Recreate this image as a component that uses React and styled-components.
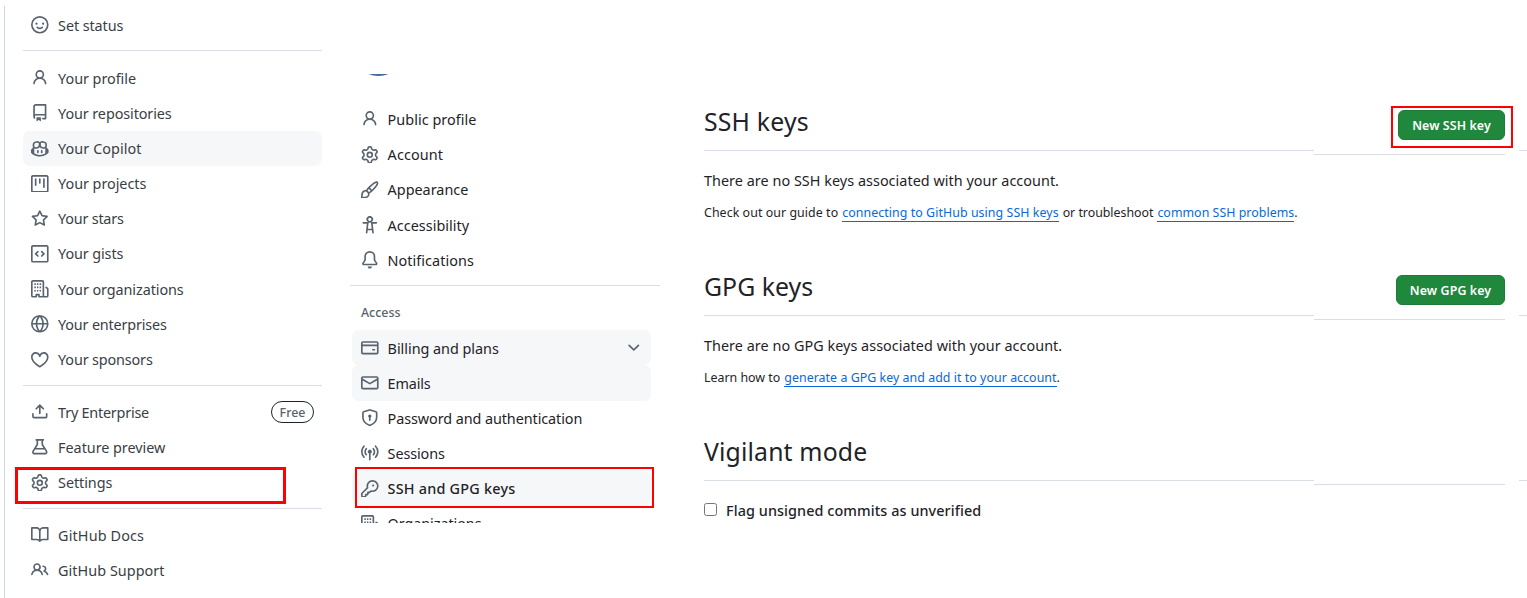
import React from "react";
import styled, { createGlobalStyle, css } from "styled-components";

const GlobalStyle = createGlobalStyle`
  *, *::before, *::after { box-sizing: border-box; }
  body {
    margin: 0;
    background: #ffffff;
    color: #1f2328;
    font-family: "Noto Sans", "Open Sans", sans-serif;
    font-size: 14.4px;
    overflow: hidden;
  }
`;

const paths = {
  smiley: "M8 0a8 8 0 1 1 0 16A8 8 0 0 1 8 0ZM1.5 8a6.5 6.5 0 1 0 13 0 6.5 6.5 0 0 0-13 0Zm3.82 1.636a.75.75 0 0 1 1.038.175l.007.009c.103.118.22.222.35.31.264.178.683.37 1.285.37.602 0 1.02-.192 1.285-.371.13-.088.247-.192.35-.31l.007-.008a.75.75 0 0 1 1.222.87c-.05.08-.12.17-.21.26-.16.166-.338.316-.53.445-.63.418-1.37.638-2.127.629-.946 0-1.652-.308-2.126-.63a3.331 3.331 0 0 1-.715-.657.75.75 0 0 1 .169-1.092ZM12 7a1 1 0 1 1-2 0 1 1 0 0 1 2 0ZM5 8a1 1 0 1 1 0-2 1 1 0 0 1 0 2Z",
  person: "M10.561 8.073a6.005 6.005 0 0 1 3.432 5.142.75.75 0 1 1-1.498.07 4.5 4.5 0 0 0-8.99 0 .75.75 0 0 1-1.498-.07 6.004 6.004 0 0 1 3.431-5.142 3.999 3.999 0 1 1 5.123 0ZM10.5 5a2.5 2.5 0 1 0-5 0 2.5 2.5 0 0 0 5 0Z",
  repo: "M2 2.5A2.5 2.5 0 0 1 4.5 0h8.75a.75.75 0 0 1 .75.75v12.5a.75.75 0 0 1-.75.75h-2.5a.75.75 0 0 1 0-1.5h1.75v-2h-8a1 1 0 0 0-.714 1.7.75.75 0 1 1-1.072 1.05A2.495 2.495 0 0 1 2 11.5Zm10.5-1h-8a1 1 0 0 0-1 1v6.708A2.486 2.486 0 0 1 4.5 9h8ZM5 12.25a.25.25 0 0 1 .25-.25h3.5a.25.25 0 0 1 .25.25v3.25a.25.25 0 0 1-.4.2l-1.45-1.087a.249.249 0 0 0-.3 0L5.4 15.7a.25.25 0 0 1-.4-.2Z",
  copilot: "M7.998 15.035c-4.562 0-7.873-2.914-7.998-3.749V9.338c.085-.628.677-1.686 1.588-2.065.013-.07.024-.143.036-.218.029-.183.06-.384.126-.612-.201-.508-.254-1.084-.254-1.656 0-.87.128-1.769.693-2.484.579-.733 1.494-1.124 2.724-1.261 1.206-.134 2.262.034 2.944.765.05.053.096.108.139.165.044-.057.094-.112.143-.165.682-.731 1.738-.899 2.944-.765 1.23.137 2.145.528 2.724 1.261.566.715.693 1.614.693 2.484 0 .572-.053 1.148-.254 1.656.066.228.098.429.126.612.012.076.024.148.037.218.924.385 1.522 1.471 1.591 2.095v1.872c0 .766-3.351 3.795-8.002 3.795Zm0-1.485c2.28 0 4.584-1.11 5.002-1.433V7.862l-.023-.116c-.49.21-1.075.291-1.727.291-1.146 0-2.059-.327-2.71-.991A3.222 3.222 0 0 1 8 6.303a3.24 3.24 0 0 1-.544.743c-.65.664-1.563.991-2.71.991-.652 0-1.236-.081-1.727-.291l-.023.116v4.255c.419.323 2.722 1.433 5.002 1.433ZM6.762 2.83c-.193-.206-.637-.413-1.682-.297-1.019.113-1.479.404-1.713.7-.247.312-.369.789-.369 1.554 0 .793.129 1.171.308 1.371.162.181.519.379 1.442.379.853 0 1.339-.235 1.638-.54.315-.322.527-.827.617-1.553.117-.935-.037-1.395-.241-1.614Zm4.155-.297c-1.044-.116-1.488.091-1.681.297-.204.219-.359.679-.242 1.614.091.726.303 1.231.618 1.553.299.305.784.54 1.638.54.922 0 1.28-.198 1.442-.379.179-.2.308-.578.308-1.371 0-.765-.123-1.242-.37-1.554-.233-.296-.693-.587-1.713-.7ZM6.25 9.037a.75.75 0 0 1 .75.75v1.501a.75.75 0 0 1-1.5 0V9.787a.75.75 0 0 1 .75-.75Zm4.25.75v1.501a.75.75 0 0 1-1.5 0V9.787a.75.75 0 0 1 1.5 0Z",
  project: "M1.75 0h12.5C15.216 0 16 .784 16 1.75v12.5A1.75 1.75 0 0 1 14.25 16H1.75A1.75 1.75 0 0 1 0 14.25V1.75C0 .784.784 0 1.75 0ZM1.5 1.75v12.5c0 .138.112.25.25.25h12.5a.25.25 0 0 0 .25-.25V1.75a.25.25 0 0 0-.25-.25H1.75a.25.25 0 0 0-.25.25ZM11.75 3a.75.75 0 0 1 .75.75v7.5a.75.75 0 0 1-1.5 0v-7.5a.75.75 0 0 1 .75-.75Zm-8.25.75a.75.75 0 0 1 1.5 0v5.5a.75.75 0 0 1-1.5 0ZM8 3a.75.75 0 0 1 .75.75v3.5a.75.75 0 0 1-1.5 0v-3.5A.75.75 0 0 1 8 3Z",
  star: "M8 .25a.75.75 0 0 1 .673.418l1.882 3.815 4.21.612a.75.75 0 0 1 .416 1.279l-3.046 2.97.719 4.192a.751.751 0 0 1-1.088.791L8 12.347l-3.766 1.98a.75.75 0 0 1-1.088-.79l.72-4.194L.818 6.374a.75.75 0 0 1 .416-1.28l4.21-.611L7.327.668A.75.75 0 0 1 8 .25Zm0 2.445L6.615 5.5a.75.75 0 0 1-.564.41l-3.097.45 2.24 2.184a.75.75 0 0 1 .216.664l-.528 3.084 2.769-1.456a.75.75 0 0 1 .698 0l2.77 1.456-.53-3.084a.75.75 0 0 1 .216-.664l2.24-2.183-3.096-.45a.75.75 0 0 1-.564-.41L8 2.694Z",
  gist: "M0 1.75C0 .784.784 0 1.75 0h12.5C15.216 0 16 .784 16 1.75v12.5A1.75 1.75 0 0 1 14.25 16H1.75A1.75 1.75 0 0 1 0 14.25Zm1.75-.25a.25.25 0 0 0-.25.25v12.5c0 .138.112.25.25.25h12.5a.25.25 0 0 0 .25-.25V1.75a.25.25 0 0 0-.25-.25Zm7.47 3.97a.75.75 0 0 1 1.06 0l2 2a.75.75 0 0 1 0 1.06l-2 2a.749.749 0 0 1-1.275-.326.749.749 0 0 1 .215-.734L10.69 8 9.22 6.53a.75.75 0 0 1 0-1.06ZM6.78 6.53 5.31 8l1.47 1.47a.749.749 0 0 1-.326 1.275.749.749 0 0 1-.734-.215l-2-2a.75.75 0 0 1 0-1.06l2-2a.751.751 0 0 1 1.042.018.751.751 0 0 1 .018 1.042Z",
  organization: "M1.75 16A1.75 1.75 0 0 1 0 14.25V1.75C0 .784.784 0 1.75 0h8.5C11.216 0 12 .784 12 1.75v12.5c0 .085-.006.168-.018.25h2.268a.25.25 0 0 0 .25-.25V8.285a.25.25 0 0 0-.111-.208l-1.055-.703a.749.749 0 1 1 .832-1.248l1.055.703c.487.325.779.871.779 1.456v5.965A1.75 1.75 0 0 1 14.25 16h-3.5a.766.766 0 0 1-.197-.026c-.099.017-.2.026-.303.026h-3a.75.75 0 0 1-.75-.75V14h-1v1.25a.75.75 0 0 1-.75.75Zm-.25-1.75c0 .138.112.25.25.25H4v-1.25a.75.75 0 0 1 .75-.75h2.5a.75.75 0 0 1 .75.75v1.25h2.25a.25.25 0 0 0 .25-.25V1.75a.25.25 0 0 0-.25-.25h-8.5a.25.25 0 0 0-.25.25ZM3 3h1.4v1.5H3ZM5.4 3h1.3v1.5H5.4ZM7.8 3h1.4v1.5H7.8ZM3 6h1.4v1.5H3ZM5.4 6h1.3v1.5H5.4ZM7.8 6h1.4v1.5H7.8ZM3 9h1.4v1.5H3ZM5.4 9h1.3v1.5H5.4ZM7.8 9h1.4v1.5H7.8Z",
  globe: "M8 0a8 8 0 1 1 0 16A8 8 0 0 1 8 0ZM5.78 8.75a9.64 9.64 0 0 0 1.363 4.177c.255.426.542.832.857 1.215.245-.296.551-.705.857-1.215A9.64 9.64 0 0 0 10.22 8.75Zm4.44-1.5a9.64 9.64 0 0 0-1.363-4.177c-.307-.51-.612-.919-.857-1.215a9.927 9.927 0 0 0-.857 1.215A9.64 9.64 0 0 0 5.78 7.25Zm-5.944 1.5H1.543a6.507 6.507 0 0 0 4.666 5.5c-.123-.181-.24-.365-.352-.552-.715-1.192-1.437-2.874-1.581-4.948Zm-2.733-1.5h2.733c.144-2.074.866-3.756 1.58-4.948.12-.197.237-.381.353-.552a6.507 6.507 0 0 0-4.666 5.5Zm10.181 1.5c-.144 2.074-.866 3.756-1.58 4.948-.12.197-.237.381-.353.552a6.507 6.507 0 0 0 4.666-5.5Zm2.733-1.5a6.507 6.507 0 0 0-4.666-5.5c.123.181.24.365.353.552.714 1.192 1.436 2.874 1.58 4.948Z",
  heart: "m8 14.25.345.666a.75.75 0 0 1-.69 0l-.008-.004-.018-.01a7.152 7.152 0 0 1-.31-.17 22.055 22.055 0 0 1-3.434-2.414C2.045 10.731 0 8.35 0 5.5 0 2.836 2.086 1 4.25 1 5.797 1 7.153 1.802 8 3.02 8.847 1.802 10.203 1 11.75 1 13.914 1 16 2.836 16 5.5c0 2.85-2.045 5.231-3.885 6.818a22.066 22.066 0 0 1-3.744 2.584l-.018.01-.006.003h-.002ZM4.25 2.5c-1.336 0-2.75 1.164-2.75 3 0 2.15 1.58 4.144 3.365 5.682A20.58 20.58 0 0 0 8 13.393a20.58 20.58 0 0 0 3.135-2.211C12.92 9.644 14.5 7.65 14.5 5.5c0-1.836-1.414-3-2.75-3-1.373 0-2.609.986-3.029 2.456a.749.749 0 0 1-1.442 0C6.859 3.486 5.623 2.5 4.25 2.5Z",
  upload: "M2.75 14A1.75 1.75 0 0 1 1 12.25v-2.5a.75.75 0 0 1 1.5 0v2.5c0 .138.112.25.25.25h10.5a.25.25 0 0 0 .25-.25v-2.5a.75.75 0 0 1 1.5 0v2.5A1.75 1.75 0 0 1 13.25 14ZM11.78 4.72a.749.749 0 1 1-1.06 1.06L8.75 3.811V9.5a.75.75 0 0 1-1.5 0V3.811L5.28 5.78a.749.749 0 1 1-1.06-1.06l3.25-3.25a.749.749 0 0 1 1.06 0l3.25 3.25Z",
  beaker: "M5 5.782V2.5h-.25a.75.75 0 0 1 0-1.5h6.5a.75.75 0 0 1 0 1.5H11v3.282l3.666 5.76C15.619 13.04 14.543 15 12.767 15H3.233c-1.776 0-2.852-1.96-1.899-3.458Zm-2.4 6.565a.75.75 0 0 0 .633 1.153h9.534a.75.75 0 0 0 .633-1.153L12.225 10.5h-8.45ZM9.5 2.5h-3V6c0 .143-.04.283-.117.403L4.73 9h6.54L9.617 6.403A.746.746 0 0 1 9.5 6Z",
  gear: "M8 0a8.2 8.2 0 0 1 .701.031C9.444.095 9.99.645 10.16 1.29l.288 1.107c.018.066.079.158.212.224.231.114.454.243.668.386.123.082.233.09.299.071l1.103-.303c.644-.176 1.392.021 1.82.63.27.385.506.792.704 1.218.315.675.111 1.422-.364 1.891l-.814.806c-.049.048-.098.147-.088.294.016.257.016.515 0 .772-.01.147.038.246.088.294l.814.806c.475.469.679 1.216.364 1.891a7.977 7.977 0 0 1-.704 1.217c-.428.61-1.176.807-1.82.63l-1.102-.302c-.067-.019-.177-.011-.3.071a5.909 5.909 0 0 1-.668.386c-.133.066-.194.158-.211.224l-.29 1.106c-.168.646-.715 1.196-1.458 1.26a8.006 8.006 0 0 1-1.402 0c-.743-.064-1.289-.614-1.458-1.26l-.289-1.106c-.018-.066-.079-.158-.212-.224a5.738 5.738 0 0 1-.668-.386c-.123-.082-.233-.09-.299-.071l-1.103.303c-.644.176-1.392-.021-1.82-.63a8.12 8.12 0 0 1-.704-1.218c-.315-.675-.111-1.422.363-1.891l.815-.806c.05-.048.098-.147.088-.294a6.214 6.214 0 0 1 0-.772c.01-.147-.038-.246-.088-.294l-.815-.806C.635 6.045.431 5.298.746 4.623a7.92 7.92 0 0 1 .704-1.217c.428-.61 1.176-.807 1.82-.63l1.102.302c.067.019.177.011.3-.071.214-.143.437-.272.668-.386.133-.066.194-.158.211-.224l.29-1.106C6.009.645 6.556.095 7.299.03 7.53.01 7.764 0 8 0Zm-.571 1.525c-.036.003-.108.036-.137.146l-.289 1.105c-.147.561-.549.967-.998 1.189-.173.086-.34.183-.5.29-.417.278-.97.423-1.529.27l-1.103-.303c-.109-.03-.175.016-.195.045-.22.312-.412.644-.573.99-.014.031-.021.11.059.19l.815.806c.411.406.562.957.53 1.456a4.709 4.709 0 0 0 0 .582c.032.499-.119 1.05-.53 1.456l-.815.806c-.081.08-.073.159-.059.19.162.346.353.677.573.989.02.03.085.076.195.046l1.102-.303c.56-.153 1.113-.008 1.53.27.161.107.328.204.501.29.447.222.85.629.997 1.189l.289 1.105c.029.109.101.143.137.146a6.6 6.6 0 0 0 1.142 0c.036-.003.108-.036.137-.146l.289-1.105c.147-.561.549-.967.998-1.189.173-.086.34-.183.5-.29.417-.278.97-.423 1.529-.27l1.103.303c.109.029.175-.016.195-.045.22-.313.411-.644.573-.99.014-.031.021-.11-.059-.19l-.815-.806c-.411-.406-.562-.957-.53-1.456a4.709 4.709 0 0 0 0-.582c-.032-.499.119-1.05.53-1.456l.815-.806c.081-.08.073-.159.059-.19a6.464 6.464 0 0 0-.573-.989c-.02-.03-.085-.076-.195-.046l-1.102.303c-.56.153-1.113.008-1.53-.27a4.44 4.44 0 0 0-.501-.29c-.447-.222-.85-.629-.997-1.189l-.289-1.105c-.029-.11-.101-.143-.137-.146a6.6 6.6 0 0 0-1.142 0ZM11 8a3 3 0 1 1-6 0 3 3 0 0 1 6 0ZM9.5 8a1.5 1.5 0 1 0-3.001.001A1.5 1.5 0 0 0 9.5 8Z",
  book: "M0 1.75A.75.75 0 0 1 .75 1h4.253c1.227 0 2.317.59 3 1.501A3.743 3.743 0 0 1 11.006 1h4.245a.75.75 0 0 1 .75.75v10.5a.75.75 0 0 1-.75.75h-4.507a2.25 2.25 0 0 0-1.591.659l-.622.621a.75.75 0 0 1-1.06 0l-.622-.621A2.25 2.25 0 0 0 5.258 13H.75a.75.75 0 0 1-.75-.75Zm7.251 10.324.004-5.073-.002-2.253A2.25 2.25 0 0 0 5.003 2.5H1.5v9h3.757a3.75 3.75 0 0 1 1.994.574ZM8.755 4.75l-.004 7.322a3.752 3.752 0 0 1 1.992-.572H14.5v-9h-3.495a2.25 2.25 0 0 0-2.25 2.25Z",
  people: "M2 5.5a3.5 3.5 0 1 1 5.898 2.549 5.508 5.508 0 0 1 3.034 4.084.75.75 0 1 1-1.482.235 4 4 0 0 0-7.9 0 .75.75 0 0 1-1.482-.236A5.507 5.507 0 0 1 3.102 8.05 3.493 3.493 0 0 1 2 5.5ZM11 4a3.001 3.001 0 0 1 2.22 5.018 5.01 5.01 0 0 1 2.56 3.012.749.749 0 0 1-.885.954.752.752 0 0 1-.549-.514 3.507 3.507 0 0 0-2.522-2.372.75.75 0 0 1-.574-.73v-.352a.75.75 0 0 1 .416-.672A1.5 1.5 0 0 0 11 5.5.75.75 0 0 1 11 4Zm-5.5-.5a2 2 0 1 0-.001 3.999A2 2 0 0 0 5.5 3.5Z",
  brush: "M11.134 1.535c.7-.509 1.416-.942 2.076-1.155.649-.21 1.463-.267 2.069.34.603.601.568 1.411.368 2.07-.202.668-.624 1.39-1.125 2.096-1.011 1.424-2.496 2.987-3.775 4.249-1.098 1.084-2.132 1.839-3.04 2.3a3.744 3.744 0 0 1-1.055 3.217c-.431.431-1.065.691-1.657.861-.614.177-1.294.287-1.914.357A21.151 21.151 0 0 1 .797 16H.743L.742 16a.75.75 0 0 1-.743-.742v-.054a21.25 21.25 0 0 1 .13-2.284c.067-.647.187-1.287.358-1.914.17-.591.43-1.226.86-1.657a3.746 3.746 0 0 1 3.227-1.054c.466-.893 1.225-1.907 2.314-2.982 1.271-1.255 2.833-2.75 4.246-3.777ZM1.62 13.089c-.051.464-.086.929-.104 1.395.466-.018.932-.053 1.396-.104a10.511 10.511 0 0 0 1.668-.309c.526-.151.856-.325 1.011-.48a2.25 2.25 0 1 0-3.182-3.182c-.155.155-.329.485-.48 1.01a10.515 10.515 0 0 0-.309 1.67Zm10.396-10.34c-1.224.89-2.605 2.189-3.822 3.384l1.718 1.718c1.21-1.205 2.51-2.597 3.387-3.833.47-.662.78-1.227.912-1.662.134-.444.032-.551.009-.575h-.001V1.78c-.014-.014-.113-.113-.548.027-.432.14-.995.462-1.655.942Zm-4.832 7.266-.001.001a9.859 9.859 0 0 0 1.63-1.142L7.155 7.216a9.7 9.7 0 0 0-1.161 1.607c.482.302.889.71 1.19 1.192Z",
  accessibility: "M9.923 5.302c.063.063.122.129.178.198H14A.75.75 0 0 1 14 7h-3.3l.578 5.163.362 2.997a.75.75 0 0 1-1.49.18L9.868 13H6.132l-.282 2.34a.75.75 0 0 1-1.49-.18l.362-2.997L5.3 7H2a.75.75 0 0 1 0-1.5h3.9a2.54 2.54 0 0 1 .176-.198 3 3 0 1 1 3.847 0ZM9.2 7.073h-.001a1.206 1.206 0 0 0-2.398 0L6.305 11.5h3.39ZM9.5 3a1.5 1.5 0 1 0-3.001.001A1.5 1.5 0 0 0 9.5 3Z",
  bell: "M8 16a2 2 0 0 0 1.985-1.75c.017-.137-.097-.25-.235-.25h-3.5c-.138 0-.252.113-.235.25A2 2 0 0 0 8 16ZM3 5a5 5 0 0 1 10 0v2.947c0 .05.015.098.042.139l1.703 2.555A1.519 1.519 0 0 1 13.482 13H2.518a1.516 1.516 0 0 1-1.263-2.36l1.703-2.554A.255.255 0 0 0 3 7.947Zm5-3.5A3.5 3.5 0 0 0 4.5 5v2.947c0 .346-.102.683-.294.97l-1.703 2.556a.017.017 0 0 0-.003.01l.001.006c0 .002.002.004.004.006l.006.004.007.001h10.964l.007-.001.006-.004.004-.006.001-.007a.017.017 0 0 0-.003-.01l-1.703-2.554a1.745 1.745 0 0 1-.294-.97V5A3.5 3.5 0 0 0 8 1.5Z",
  card: "M10.75 9a.75.75 0 0 0 0 1.5h1.5a.75.75 0 0 0 0-1.5h-1.5ZM0 3.75C0 2.784.784 2 1.75 2h12.5c.966 0 1.75.784 1.75 1.75v8.5A1.75 1.75 0 0 1 14.25 14H1.75A1.75 1.75 0 0 1 0 12.25ZM14.5 6.5h-13v5.75c0 .138.112.25.25.25h12.5a.25.25 0 0 0 .25-.25Zm0-2.75a.25.25 0 0 0-.25-.25H1.75a.25.25 0 0 0-.25.25V5h13Z",
  mail: "M1.75 2h12.5c.966 0 1.75.784 1.75 1.75v8.5A1.75 1.75 0 0 1 14.25 14H1.75A1.75 1.75 0 0 1 0 12.25v-8.5C0 2.784.784 2 1.75 2ZM1.5 12.251c0 .138.112.25.25.25h12.5a.25.25 0 0 0 .25-.25V5.809L8.38 9.397a.75.75 0 0 1-.76 0L1.5 5.809v6.442Zm13-8.181v-.32a.25.25 0 0 0-.25-.25H1.75a.25.25 0 0 0-.25.25v.32L8 7.88Z",
  shield: "m8.533.133 5.25 1.68A1.75 1.75 0 0 1 15 3.48V7c0 1.566-.32 3.182-1.303 4.682-.983 1.498-2.585 2.813-5.032 3.855a1.697 1.697 0 0 1-1.33 0c-2.447-1.042-4.049-2.357-5.032-3.855C1.32 10.182 1 8.566 1 7V3.48a1.755 1.755 0 0 1 1.217-1.667l5.25-1.68a1.748 1.748 0 0 1 1.066 0Zm-.61 1.429.001.001-5.25 1.68a.251.251 0 0 0-.174.237V7c0 1.36.275 2.666 1.057 3.859.784 1.194 2.121 2.342 4.366 3.298a.196.196 0 0 0 .154 0c2.245-.957 3.582-2.103 4.366-3.297C13.225 9.666 13.5 8.358 13.5 7V3.48a.25.25 0 0 0-.174-.238l-5.25-1.68a.25.25 0 0 0-.153 0ZM9.5 6.5c0 .536-.286 1.032-.75 1.3v2.45a.75.75 0 0 1-1.5 0V7.8A1.5 1.5 0 1 1 9.5 6.5Z",
  broadcast: "M8.75 8.582v5.668a.75.75 0 0 1-1.5 0V8.582a1.75 1.75 0 1 1 1.5 0Zm3.983-7.125a.75.75 0 0 1 1.06.026A7.976 7.976 0 0 1 16 7c0 2.139-.84 4.083-2.207 5.517a.75.75 0 1 1-1.086-1.034A6.474 6.474 0 0 0 14.5 7a6.474 6.474 0 0 0-1.793-4.483.75.75 0 0 1 .026-1.06Zm-9.466 0c.3.286.312.76.026 1.06A6.474 6.474 0 0 0 1.5 7a6.47 6.47 0 0 0 1.793 4.483.75.75 0 0 1-1.086 1.034A7.973 7.973 0 0 1 0 7c0-2.139.84-4.083 2.207-5.517a.75.75 0 0 1 1.06-.026Zm8.556 2.321A4.988 4.988 0 0 1 13 7a4.988 4.988 0 0 1-1.177 3.222.75.75 0 1 1-1.146-.967A3.487 3.487 0 0 0 11.5 7c0-.86-.309-1.645-.823-2.255a.75.75 0 0 1 1.146-.967Zm-6.492.958A3.48 3.48 0 0 0 4.5 7a3.48 3.48 0 0 0 .823 2.255.75.75 0 0 1-1.146.967A4.981 4.981 0 0 1 3 7a4.982 4.982 0 0 1 1.188-3.236.75.75 0 1 1 1.143.972Z",
  key: "M10.5 0a5.499 5.499 0 1 1-1.288 10.848l-.932.932a.749.749 0 0 1-.53.22H7v.75a.749.749 0 0 1-.22.53l-.5.5a.749.749 0 0 1-.53.22H5v.75a.749.749 0 0 1-.22.53l-.5.5a.749.749 0 0 1-.53.22h-2A1.75 1.75 0 0 1 0 14.25v-2c0-.199.079-.389.22-.53l4.932-4.932A5.5 5.5 0 0 1 10.5 0Zm-4 5.5c-.001.431.069.86.205 1.269a.75.75 0 0 1-.181.768L1.5 12.56v1.69c0 .138.112.25.25.25h1.69l.06-.06v-1.19a.75.75 0 0 1 .75-.75h1.19l.06-.06v-1.19a.75.75 0 0 1 .75-.75h1.19l1.023-1.025a.75.75 0 0 1 .768-.18A4 4 0 1 0 6.5 5.5ZM11 6a1 1 0 1 1 0-2 1 1 0 0 1 0 2Z",
  chevron: "M12.78 5.22a.749.749 0 0 1 0 1.06l-4.25 4.25a.749.749 0 0 1-1.06 0L3.22 6.28a.749.749 0 1 1 1.06-1.06L8 8.939l3.72-3.719a.749.749 0 0 1 1.06 0Z",
};

const Glyph = styled.svg`
  width: 17.6px;
  height: 17.6px;
  flex: none;
  fill: #59636e;
`;

const Icon = ({ name }) => (
  <Glyph viewBox="0 0 16 16" aria-hidden="true">
    <path d={paths[name]} fillRule="evenodd" />
  </Glyph>
);

const Page = styled.div`
  position: relative;
  display: flex;
  align-items: flex-start;
  width: 1527px;
  height: 598px;
  overflow: hidden;
  background: #ffffff;
`;

const AccountMenu = styled.nav`
  width: 322px;
  height: 592px;
  margin: 6px 0 0 4px;
  padding: 1.4px 4px 0 18px;
  border-left: 1px solid #d1d9e0;
`;

const Row = styled.a`
  display: flex;
  align-items: center;
  gap: ${(p) => (p.$soft ? 9.5 : 9)}px;
  height: 35.2px;
  padding: 0 8px 0 ${(p) => (p.$soft ? 8 : 9)}px;
  border-radius: 6.6px;
  background: ${(p) => (p.$shaded ? "#f6f7f9" : "transparent")};
  font-weight: ${(p) => (p.$current ? 500 : 400)};
  text-decoration: none;
  color: inherit;
`;

const RowLabel = styled.span`
  flex: 1;
  padding-top: ${(p) => (p.$soft ? 1.2 : 1.6)}px;
  white-space: nowrap;
  line-height: 22px;
  letter-spacing: ${(p) => p.$tracking || 0}px;
  color: ${(p) => (p.$soft ? "#3a3e44" : "#1f2328")};
`;

const Divider = styled.hr`
  height: 1px;
  margin: ${(p) => p.$gap};
  border: 0;
  background: #d8dee4;
`;

const Pill = styled.span`
  width: 43px;
  height: 22px;
  border: 1px solid #1f2328;
  border-radius: 11px;
  color: #59636e;
  font-size: 12.4px;
  font-weight: 500;
  line-height: 21px;
  text-align: center;
`;

const SettingsNav = styled.nav`
  width: 310px;
  height: 449px;
  margin: 74px 0 0 24px;
  overflow: hidden;
`;

const AvatarClip = styled.div`
  display: flex;
  align-items: flex-end;
  height: 1.6px;
  margin: 0 0 26px 2px;
  overflow: hidden;
`;

const Avatar = styled.div`
  flex: none;
  width: 53px;
  height: 53px;
  border-radius: 50%;
  background: #4a6896;
`;

const NavGroup = styled.div`
  width: 299px;
  margin-left: 2px;
`;

const GroupTitle = styled.h3`
  margin: 0;
  padding: 1px 9px 0;
  height: 36px;
  line-height: 36px;
  font-size: 12.4px;
  font-weight: 500;
  color: #59636e;
`;

const Main = styled.main`
  flex: 1;
  margin: 100px 0 0 44px;
`;

const Section = styled.section`
  height: 165px;
`;

const SectionHead = styled.header`
  display: flex;
  align-items: flex-start;
  height: 55px;
`;

const Title = styled.h2`
  width: 610px;
  height: 51px;
  margin: 0;
  border-bottom: 1px solid #d8dee4;
  font-size: 24.8px;
  font-weight: 400;
  line-height: 42px;
  letter-spacing: ${(p) => p.$tracking || 0}px;
`;

const HeadActions = styled.div`
  display: flex;
  justify-content: flex-end;
  width: 191px;
  height: 55px;
  padding-top: 10px;
  border-bottom: 1px solid #d8dee4;
`;

const HeadTail = styled.div`
  width: 8px;
  height: 51px;
  margin-left: 14px;
  border-bottom: 1px solid #d8dee4;
`;

const PrimaryButton = styled.button`
  height: 30px;
  width: ${(p) => p.$width}px;
  padding: 1px 0 0;
  border: 1px solid #1f7a37;
  border-radius: 6px;
  background: #1f883d;
  color: #ffffff;
  font: 600 12.4px "Noto Sans", sans-serif;
  line-height: 28px;
  letter-spacing: 0.1px;
  white-space: nowrap;
`;

const Lead = styled.p`
  margin: 14px 0 0;
  line-height: 24px;
  white-space: nowrap;
  letter-spacing: 0.035px;
`;

const Note = styled.p`
  display: flex;
  gap: 4px;
  margin: 11px 0 0;
  font-size: 12.4px;
  line-height: 18px;
  white-space: nowrap;
`;

const NoteText = styled.span`
  letter-spacing: ${(p) => p.$tracking || 0}px;
`;

const NoteLink = styled.a`
  height: 18px;
  border-bottom: 1px solid #0969da;
  color: #0969da;
  letter-spacing: ${(p) => p.$tracking || 0}px;
`;

const Stop = styled.span`
  margin-left: -4px;
`;

const CheckRow = styled.label`
  display: flex;
  align-items: center;
  gap: 9px;
  margin-top: 13px;
  height: 24px;
  font-weight: 500;
  letter-spacing: 0.08px;
`;

const Checkbox = styled.input`
  appearance: none;
  width: 13px;
  height: 13px;
  margin: 0 0 2px;
  border: 1px solid #767676;
  border-radius: 2.5px;
  background: #ffffff;
`;

/* Red callout frames laid over the page. */
const Callout = styled.div`
  position: absolute;
  pointer-events: none;
  border: 2px solid #ff0000;
  ${(p) => p.$target === "settings" && css`left: 15px; top: 467px; width: 271px; height: 37px; border-width: 3px;`}
  ${(p) => p.$target === "keys" && css`left: 355px; top: 467px; width: 299px; height: 41px;`}
  ${(p) => p.$target === "button" && css`left: 1391px; top: 106px; width: 122px; height: 42px;`}
`;

const accountGroups = [
  [["smiley", "Set status", { tracking: -0.09 }]],
  [
    ["person", "Your profile", { tracking: -0.04 }],
    ["repo", "Your repositories", { tracking: -0.1 }],
    ["copilot", "Your Copilot", { tracking: 0.07, shaded: true }],
    ["project", "Your projects", { tracking: -0.04 }],
    ["star", "Your stars", { tracking: -0.22 }],
    ["gist", "Your gists", { tracking: -0.11 }],
    ["organization", "Your organizations", { tracking: -0.08 }],
    ["globe", "Your enterprises", { tracking: -0.18 }],
    ["heart", "Your sponsors", { tracking: -0.15 }],
  ],
  [
    ["upload", "Try Enterprise", { tracking: -0.22, pill: "Free" }],
    ["beaker", "Feature preview", { tracking: -0.04 }],
    ["gear", "Settings", { tracking: -0.07 }],
  ],
  [
    ["book", "GitHub Docs", { tracking: 0.13 }],
    ["people", "GitHub Support", { tracking: 0.04 }],
  ],
];

const profileItems = [
  ["person", "Public profile", { tracking: 0.04 }],
  ["gear", "Account", { tracking: 0.1 }],
  ["brush", "Appearance"],
  ["accessibility", "Accessibility", { tracking: 0.03 }],
  ["bell", "Notifications", { tracking: 0.05 }],
];

const accessItems = [
  ["card", "Billing and plans", { tracking: -0.03, shaded: true, expandable: true }],
  ["mail", "Emails", { tracking: -0.15, shaded: true }],
  ["shield", "Password and authentication", { tracking: -0.08 }],
  ["broadcast", "Sessions", { tracking: -0.1 }],
  ["key", "SSH and GPG keys", { tracking: 0.22, shaded: true, current: true }],
  ["organization", "Organizations", { tracking: -0.07 }],
];

const Item = ({ item: [icon, label, opts = {}], soft }) => (
  <Row $soft={soft} $shaded={opts.shaded} $current={opts.current}>
    <Icon name={icon} />
    <RowLabel $soft={soft} $tracking={opts.tracking}>{label}</RowLabel>
    {opts.pill && <Pill>{opts.pill}</Pill>}
    {opts.expandable && <Icon name="chevron" />}
  </Row>
);

const Head = ({ title, tracking, button, width }) => (
  <SectionHead>
    <Title $tracking={tracking}>{title}</Title>
    <HeadActions>{button && <PrimaryButton $width={width}>{button}</PrimaryButton>}</HeadActions>
    <HeadTail />
  </SectionHead>
);

export default function App() {
  return (
    <>
      <GlobalStyle />
      <Page>
        <AccountMenu>
          {accountGroups.map((group, i) => (
            <React.Fragment key={i}>
              {i > 0 && <Divider $gap={i === 1 ? "7.6px 0 9.2px" : "7.6px 0 8.8px"} />}
              {group.map((item) => <Item key={item[1]} item={item} soft />)}
            </React.Fragment>
          ))}
        </AccountMenu>
        <SettingsNav>
          <AvatarClip><Avatar /></AvatarClip>
          <NavGroup>{profileItems.map((item) => <Item key={item[1]} item={item} />)}</NavGroup>
          <Divider $gap="7.6px 0 8px" />
          <NavGroup>
            <GroupTitle>Access</GroupTitle>
            {accessItems.map((item) => <Item key={item[1]} item={item} />)}
          </NavGroup>
        </SettingsNav>
        <Main>
          <Section>
            <Head title="SSH keys" tracking={0.19} button="New SSH key" width={107} />
            <Lead>There are no SSH keys associated with your account.</Lead>
            <Note>
              <NoteText $tracking={0.06}>Check out our guide to</NoteText>
              <NoteLink $tracking={0.06}>connecting to GitHub using SSH keys</NoteLink>
              <NoteText $tracking={-0.03}>or troubleshoot</NoteText>
              <NoteLink $tracking={0.03}>common SSH problems</NoteLink>
              <Stop>.</Stop>
            </Note>
          </Section>
          <Section>
            <Head title="GPG keys" tracking={0.05} button="New GPG key" width={109} />
            <Lead>There are no GPG keys associated with your account.</Lead>
            <Note>
              <NoteText>Learn how to</NoteText>
              <NoteLink $tracking={0.04}>generate a GPG key and add it to your account</NoteLink>
              <Stop>.</Stop>
            </Note>
          </Section>
          <Section>
            <Head title="Vigilant mode" tracking={0.15} />
            <CheckRow><Checkbox type="checkbox" />Flag unsigned commits as unverified</CheckRow>
          </Section>
        </Main>
        <Callout $target="settings" />
        <Callout $target="keys" />
        <Callout $target="button" />
      </Page>
    </>
  );
}
